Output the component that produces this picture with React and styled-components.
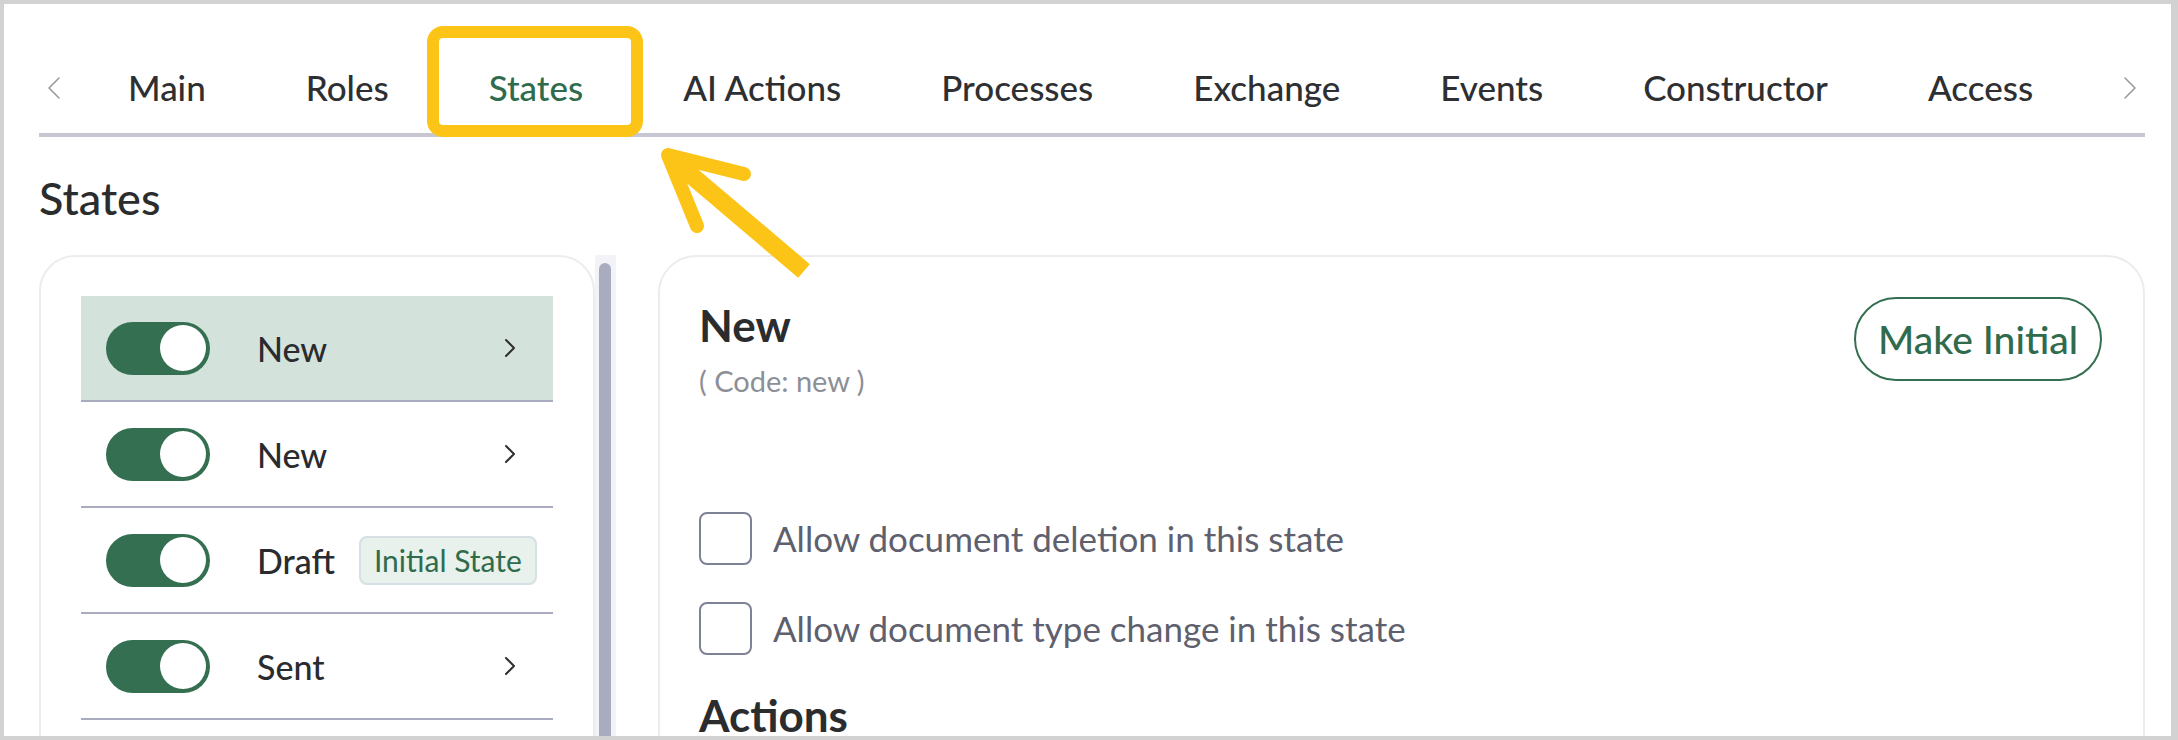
import styled, { createGlobalStyle } from 'styled-components';

// ── Base ──────────────────────────────────────────────────
const GlobalStyle = createGlobalStyle`
  html, body {
    margin: 0;
    padding: 0;
    background: #fff;
  }
  body {
    font-family: 'Lato', 'Noto Sans', sans-serif;
    color: #2c2d30;
  }
`;

const Frame = styled.div`
  position: relative;
  width: 2178px;
  height: 740px;
  box-sizing: border-box;
  border-style: solid;
  border-color: #d2d2d2;
  border-width: 4px 7px 4px 4px;
  overflow: hidden;
  background: #fff;
`;

const Content = styled.div`
  padding: 0 26px 0 35px;
  display: flex;
  flex-direction: column;
`;

// ── Tabs ──────────────────────────────────────────────────
const TabBar = styled.nav`
  display: flex;
  align-items: center;
  padding: 62px 0 24px;
  border-bottom: 4px solid #c6c7d1;
`;

const ArrowBtn = styled.button`
  width: 30px;
  height: 43px;
  padding: 0;
  border: 0;
  background: none;
  display: flex;
  align-items: center;
  justify-content: center;
  margin-left: ${({ $end }) => ($end ? 'auto' : '0')};
  margin-right: ${({ $end }) => ($end ? '0' : '9px')};
  cursor: pointer;
`;

const TabList = styled.div`
  display: flex;
`;

const Tab = styled.span`
  position: relative;
  padding: 0 50px;
  height: 43px;
  line-height: 43px;
  font-size: 35px;
  font-weight: 500;
  white-space: nowrap;
  color: ${({ $active }) => ($active ? '#2f6b4c' : '#2e2f32')};
  cursor: pointer;
`;

// ── Annotation (highlight box + pointer arrow) ────────────
const Highlight = styled.div`
  position: absolute;
  left: 423px;
  top: 22px;
  width: 216px;
  height: 111px;
  box-sizing: border-box;
  border: 12px solid #fdc418;
  border-radius: 16px;
  pointer-events: none;
`;

const Pointer = styled.svg`
  position: absolute;
  left: 636px;
  top: 126px;
  pointer-events: none;
`;

// ── Section ───────────────────────────────────────────────
const Heading = styled.h2`
  margin: 34px 0 30px;
  font-size: 45px;
  line-height: 1.2;
  font-weight: 500;
  color: #2b2c2e;
`;

const Panels = styled.div`
  display: flex;
  gap: 42px;
  align-items: flex-start;
`;

// ── States list ───────────────────────────────────────────
const ListColumn = styled.div`
  display: flex;
  flex-shrink: 0;
`;

const ListCard = styled.div`
  width: 556px;
  height: 560px;
  box-sizing: border-box;
  border: 2px solid #ececf0;
  border-radius: 36px;
  padding: 39px 40px 0;
`;

const ScrollTrack = styled.div`
  width: 21px;
  height: 560px;
  background: #f3f3f7;
  padding: 8px 0 0 4px;
  box-sizing: border-box;
`;

const ScrollThumb = styled.div`
  width: 12px;
  height: 520px;
  border-radius: 6px;
  background: #a9acbf;
`;

const StateRow = styled.div`
  display: flex;
  align-items: center;
  height: 104px;
  padding: 0 37px 0 25px;
  border-bottom: 2px solid #a9abc0;
  background: ${({ $selected }) => ($selected ? '#d4e2dc' : 'transparent')};
`;

const Toggle = styled.span`
  display: flex;
  justify-content: ${({ $on }) => ($on ? 'flex-end' : 'flex-start')};
  align-items: center;
  width: 104px;
  height: 53px;
  box-sizing: border-box;
  padding: 0 4px;
  border-radius: 27px;
  background: ${({ $on }) => ($on ? '#346f51' : '#c5c7d2')};
  flex-shrink: 0;

  &::after {
    content: '';
    width: 46px;
    height: 46px;
    border-radius: 50%;
    background: #fff;
  }
`;

const StateName = styled.span`
  margin-left: 47px;
  font-size: 34px;
  font-weight: 500;
  color: #2a2b2e;
`;

const Badge = styled.span`
  margin-left: 24px;
  height: 49px;
  box-sizing: border-box;
  padding: 0 13px;
  display: inline-flex;
  align-items: center;
  font-size: 30px;
  color: #2f6b4c;
  background: #e9f1ed;
  border: 2px solid #d6dfe4;
  border-radius: 8px;
  white-space: nowrap;
`;

const RowChevron = styled.svg`
  margin-left: auto;
  flex-shrink: 0;
`;

// ── Detail panel ──────────────────────────────────────────
const DetailCard = styled.div`
  flex: 1;
  height: 560px;
  box-sizing: border-box;
  border: 2px solid #ececf0;
  border-radius: 38px;
  padding: 42px 41px 0 39px;
`;

const DetailHead = styled.div`
  display: flex;
  justify-content: space-between;
  align-items: flex-start;
`;

const Title = styled.h3`
  margin: 0;
  font-size: 44px;
  line-height: 1.2;
  font-weight: 700;
  color: #2b2c2e;
`;

const Code = styled.div`
  margin-top: 12px;
  font-size: 29px;
  line-height: 1.2;
  color: #8d8f97;
`;

const OutlineButton = styled.button`
  margin-top: -2px;
  height: 84px;
  padding: 0 22px;
  border: 2px solid #346f51;
  border-radius: 42px;
  background: #fff;
  color: #2f6b4c;
  font-family: 'Lato', 'Noto Sans', sans-serif;
  font-size: 39px;
  font-weight: 500;
  cursor: pointer;
`;

const Options = styled.div`
  margin-top: 113px;
  display: flex;
  flex-direction: column;
  gap: 37px;
`;

const Option = styled.label`
  display: flex;
  align-items: center;
  gap: 21px;
  font-size: 35px;
  color: #5e606d;
  cursor: pointer;
`;

const Box = styled.span`
  width: 53px;
  height: 53px;
  box-sizing: border-box;
  border: 2px solid #7d8295;
  border-radius: 8px;
  flex-shrink: 0;
`;

const SubHeading = styled.h3`
  margin: 34px 0 0;
  font-size: 44px;
  line-height: 1.2;
  font-weight: 700;
  color: #2b2c2e;
`;

const tabs = ['Main', 'Roles', 'States', 'AI Actions', 'Processes', 'Exchange', 'Events', 'Constructor', 'Access'];

const states = [
  { name: 'New', selected: true },
  { name: 'New' },
  { name: 'Draft', initial: true },
  { name: 'Sent' },
];

function Chevron({ dir = 'right', color = '#9a9ba0', w = 12, h = 22, sw = 1.6 }) {
  const d = dir === 'left' ? `M${w - 1} 1 L1 ${h / 2} L${w - 1} ${h - 1}` : `M1 1 L${w - 1} ${h / 2} L1 ${h - 1}`;
  return (
    <svg width={w} height={h} viewBox={`0 0 ${w} ${h}`}>
      <path d={d} fill="none" stroke={color} strokeWidth={sw} strokeLinecap="round" strokeLinejoin="round" />
    </svg>
  );
}

export default function App() {
  return (
    <>
      <GlobalStyle />
      <Frame>
        <Content>
          <TabBar>
            <ArrowBtn type="button">
              <Chevron dir="left" />
            </ArrowBtn>
            <TabList>
              {tabs.map((t) => (
                <Tab key={t} $active={t === 'States'}>
                  {t}
                </Tab>
              ))}
            </TabList>
            <ArrowBtn type="button" $end>
              <Chevron />
            </ArrowBtn>
          </TabBar>

          <Heading>States</Heading>

          <Panels>
            <ListColumn>
              <ListCard>
                {states.map((s, i) => (
                  <StateRow key={i} $selected={s.selected}>
                    <Toggle $on />
                    <StateName>{s.name}</StateName>
                    {s.initial ? (
                      <Badge>Initial State</Badge>
                    ) : (
                      <RowChevron width="12" height="22" viewBox="0 0 12 22">
                        <path d="M2 3 L10 11 L2 19" fill="none" stroke="#2e2f32" strokeWidth="2" strokeLinecap="round" strokeLinejoin="round" />
                      </RowChevron>
                    )}
                  </StateRow>
                ))}
              </ListCard>
              <ScrollTrack>
                <ScrollThumb />
              </ScrollTrack>
            </ListColumn>

            <DetailCard>
              <DetailHead>
                <div>
                  <Title>New</Title>
                  <Code>( Code: new )</Code>
                </div>
                <OutlineButton type="button">Make Initial</OutlineButton>
              </DetailHead>

              <Options>
                <Option>
                  <Box />
                  Allow document deletion in this state
                </Option>
                <Option>
                  <Box />
                  Allow document type change in this state
                </Option>
              </Options>

              <SubHeading>Actions</SubHeading>
            </DetailCard>
          </Panels>
        </Content>

        <Highlight />
        <Pointer width="190" height="160" viewBox="0 0 190 160">
          <path d="M32 29 L164 141" fill="none" stroke="#fdc418" strokeWidth="18" />
          <path d="M104 44 L28 25 L57 96" fill="none" stroke="#fdc418" strokeWidth="14" strokeLinecap="round" strokeLinejoin="round" />
        </Pointer>
      </Frame>
    </>
  );
}
